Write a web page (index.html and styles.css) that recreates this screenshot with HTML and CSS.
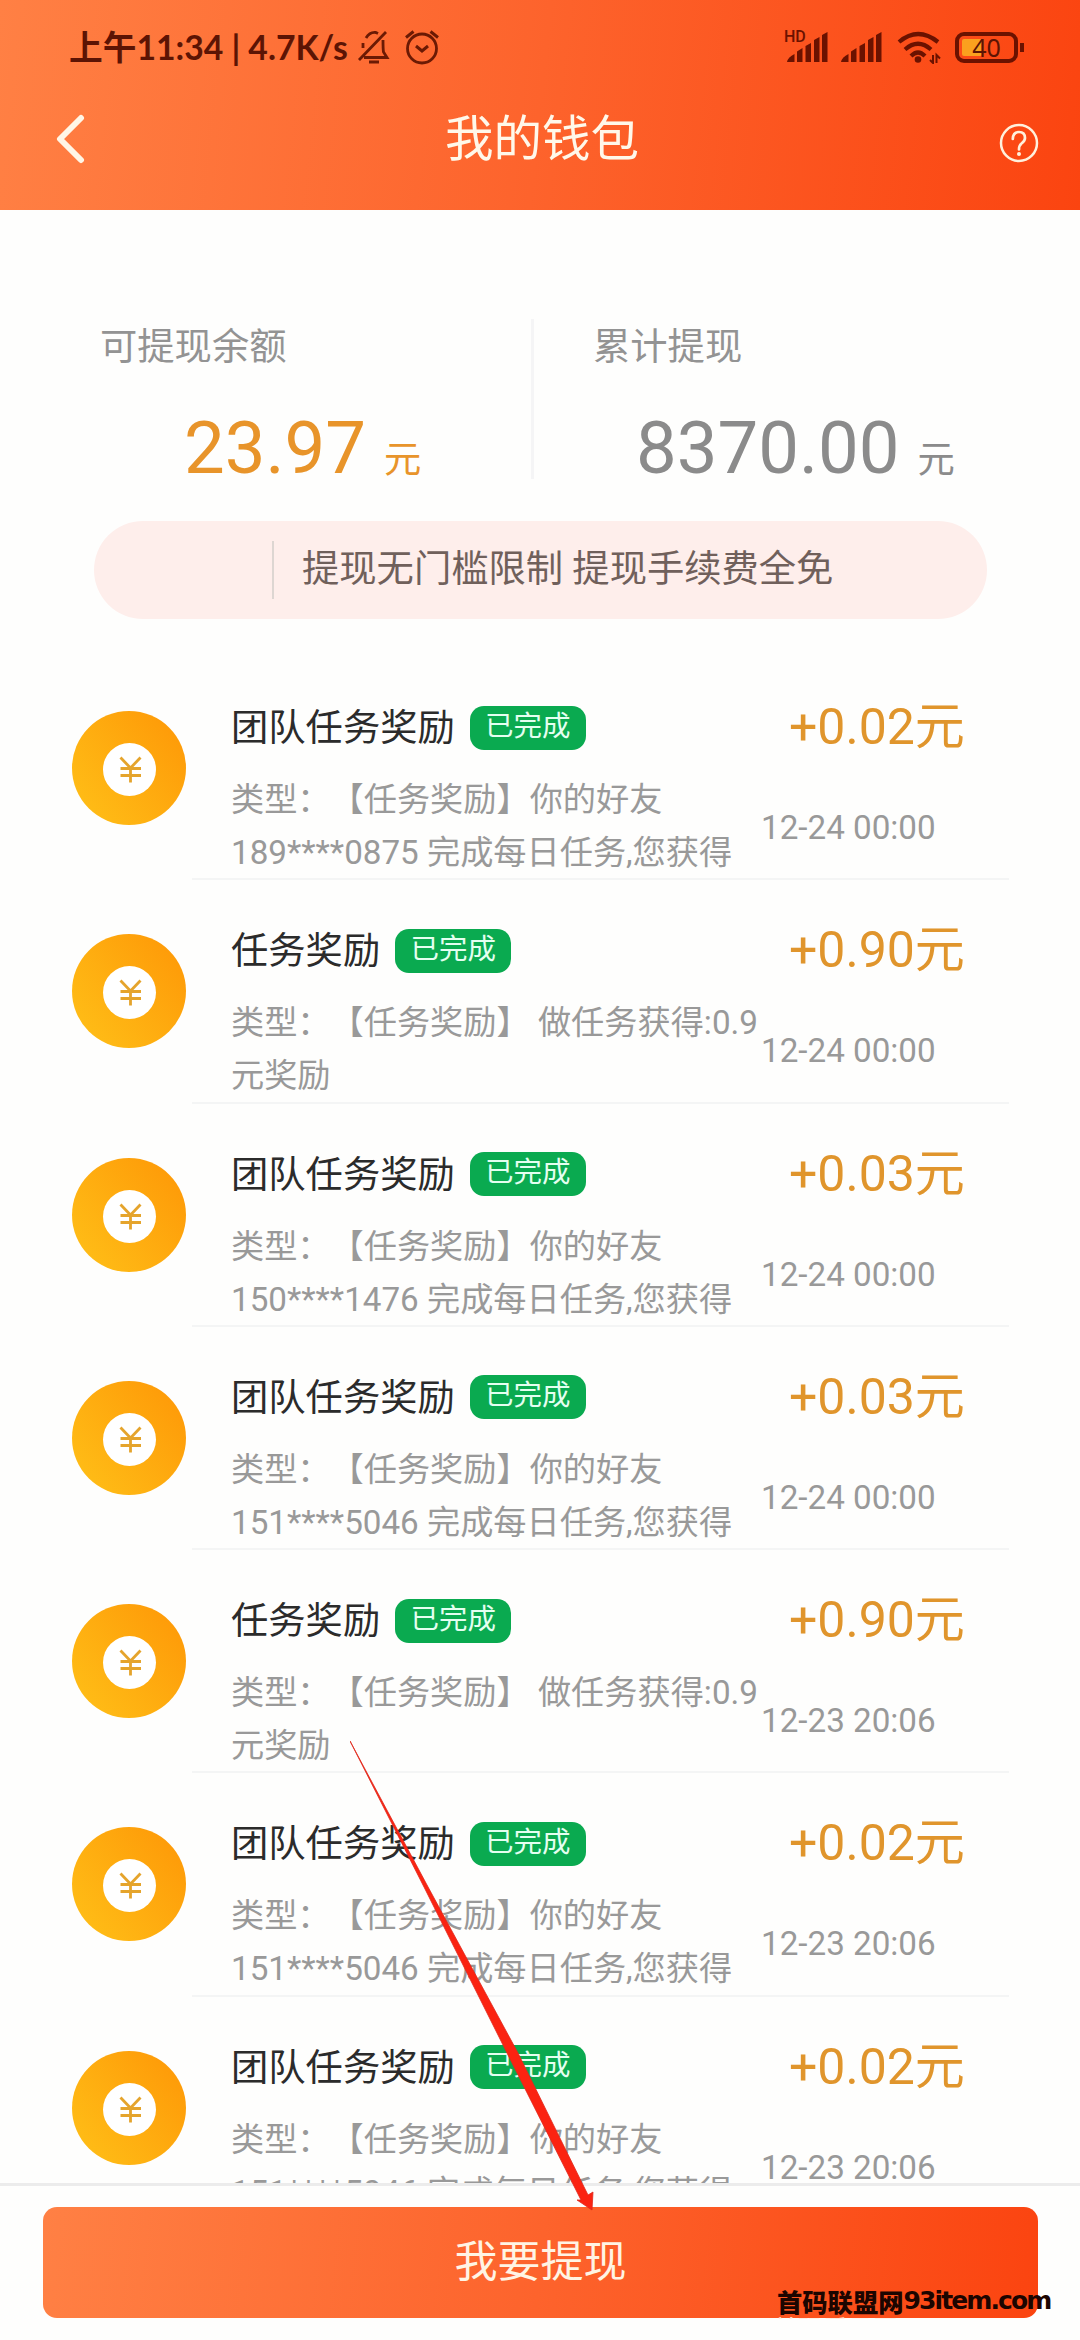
FILE: index.html
```html
<!DOCTYPE html>
<html lang="zh-CN">
<head>
<meta charset="utf-8">
<title>我的钱包</title>
<link rel="stylesheet" href="styles.css">
</head>
<body>
<svg class="defs" width="0" height="0" aria-hidden="true">
  <defs>
    <linearGradient id="gold" x1="0" y1="1" x2="1" y2="0.2">
      <stop offset="0" stop-color="#ffc118"/>
      <stop offset="1" stop-color="#fe9a08"/>
    </linearGradient>
    <symbol id="coin" viewBox="0 0 114 114">
      <circle cx="57" cy="57" r="57" fill="url(#gold)"/>
      <circle cx="57.500" cy="58.500" r="26.500" fill="#fff"/>
      <path d="M48.500 46.500L58.500 57L68.500 46.500M58.500 57V71.500M48.500 57.500H69M48.500 64.500H69" fill="none" stroke="#e5a42c" stroke-width="2.800"/>
    </symbol>
    <symbol id="bars" viewBox="0 0 42 31">
      <path d="M1 30Q2 25 8.500 22V30ZM11 19.500L16.500 16V30H11ZM19.500 14L25 11V30H19.500ZM28 8L33.500 5V30H28ZM36 3L41.500 0V30H36Z" fill="#6b1200"/>
    </symbol>
  </defs>
</svg>
<div class="screen">
  <header class="header">
    <div class="status">
      <span class="clock">上午11:34 | 4.7K/s</span>
      <svg class="bell" viewBox="0 0 34 36"><path d="M10 9Q14 2.500 20 3.500L22 4.500M27 11Q27 20 27.500 23L31 28.500H8M7 19V14M3 31L30 3M13 33H23" fill="none" stroke="#6b1a04" stroke-width="2.800"/></svg>
      <svg class="alarm" viewBox="0 0 36 36"><path d="M2 8.500L9.500 2.500M26.500 2.500L34 8.500M12 17L18 22L24 17" fill="none" stroke="#6b1a04" stroke-width="3"/><circle cx="18" cy="19.500" r="14.500" fill="none" stroke="#6b1a04" stroke-width="2.800"/></svg>
      <span class="spacer"></span>
      <span class="sim"><svg class="bars"><use href="#bars"/></svg><span class="hd">HD</span></span>
      <svg class="bars second"><use href="#bars"/></svg>
      <svg class="wifi" viewBox="0 0 44 33"><path d="M2 11Q21 -5 41 11M8 18.500Q21 7 34 18.500M14 25Q21 18 28 25" fill="none" stroke="#6b1200" stroke-width="4.200"/><circle cx="21" cy="28.500" r="3.300" fill="#6b1200"/><path d="M36 24V32L33 29M39.500 32V24L43 27.500" fill="none" stroke="#6b1200" stroke-width="2"/></svg>
      <span class="battery"><span class="level"></span><span class="pct">40</span></span><span class="nub"></span>
    </div>
    <div class="nav">
      <svg class="back" viewBox="0 0 30 50"><path d="M25 4L4 25L25 46" fill="none" stroke="#fff6e6" stroke-width="6" stroke-linecap="round" stroke-linejoin="round"/></svg>
      <h1 class="title">我的钱包</h1>
      <svg class="help" viewBox="0 0 40 40"><circle cx="20" cy="20" r="18" fill="none" stroke="#fff0dc" stroke-width="2.500"/><path d="M13.800 16Q14 9 20 9Q26 9 26 15Q26 18 22.500 20.500Q20 22.500 20 26.500" fill="none" stroke="#fff0dc" stroke-width="2.700" stroke-linecap="round"/><circle cx="20" cy="31" r="2" fill="#fff0dc"/></svg>
    </div>
  </header>
  <main class="main">
    <section class="balances">
      <div class="balance">
        <div class="label">可提现余额</div>
        <div class="value gold">23.97<span class="unit">元</span></div>
      </div>
      <div class="balance total">
        <div class="label">累计提现</div>
        <div class="value">8370.00<span class="unit">元</span></div>
      </div>
    </section>
    <div class="notice"><span class="rule"></span><span class="notice-text">提现无门槛限制 提现手续费全免</span></div>
    <ul class="list">
      <li class="item"><svg class="coin"><use href="#coin"/></svg><div class="info"><div class="name">团队任务奖励<span class="tag">已完成</span></div><div class="desc">类型：【任务奖励】你的好友<br>189****0875 完成每日任务,您获得</div></div><div class="side"><div class="amount">+0.02元</div><div class="time">12-24 00:00</div></div></li>
      <li class="item"><svg class="coin"><use href="#coin"/></svg><div class="info"><div class="name">任务奖励<span class="tag">已完成</span></div><div class="desc">类型：【任务奖励】 做任务获得:0.9<br>元奖励</div></div><div class="side"><div class="amount">+0.90元</div><div class="time">12-24 00:00</div></div></li>
      <li class="item"><svg class="coin"><use href="#coin"/></svg><div class="info"><div class="name">团队任务奖励<span class="tag">已完成</span></div><div class="desc">类型：【任务奖励】你的好友<br>150****1476 完成每日任务,您获得</div></div><div class="side"><div class="amount">+0.03元</div><div class="time">12-24 00:00</div></div></li>
      <li class="item"><svg class="coin"><use href="#coin"/></svg><div class="info"><div class="name">团队任务奖励<span class="tag">已完成</span></div><div class="desc">类型：【任务奖励】你的好友<br>151****5046 完成每日任务,您获得</div></div><div class="side"><div class="amount">+0.03元</div><div class="time">12-24 00:00</div></div></li>
      <li class="item"><svg class="coin"><use href="#coin"/></svg><div class="info"><div class="name">任务奖励<span class="tag">已完成</span></div><div class="desc">类型：【任务奖励】 做任务获得:0.9<br>元奖励</div></div><div class="side"><div class="amount">+0.90元</div><div class="time">12-23 20:06</div></div></li>
      <li class="item"><svg class="coin"><use href="#coin"/></svg><div class="info"><div class="name">团队任务奖励<span class="tag">已完成</span></div><div class="desc">类型：【任务奖励】你的好友<br>151****5046 完成每日任务,您获得</div></div><div class="side"><div class="amount">+0.02元</div><div class="time">12-23 20:06</div></div></li>
      <li class="item"><svg class="coin"><use href="#coin"/></svg><div class="info"><div class="name">团队任务奖励<span class="tag">已完成</span></div><div class="desc">类型：【任务奖励】你的好友<br>151****5046 完成每日任务,您获得</div></div><div class="side"><div class="amount">+0.02元</div><div class="time">12-23 20:06</div></div></li>
    </ul>
  </main>
  <footer class="footer"><button class="withdraw">我要提现</button></footer>
  <svg class="arrow" viewBox="0 0 246 472"><path d="M0 0L77 144L168 312L238 454L243 451L242 469L227 459L231 459L157 312L74 146Z" fill="#fb2311" stroke="#e0281c" stroke-width="0.800"/></svg>
  <div class="watermark">首码联盟网<span class="site">93item.com</span></div>
  <div class="ghost"><span>首码看日网</span><span>2019</span></div>
</div>
</body>
</html>
```
FILE: styles.css
```css
* { box-sizing: border-box; }
body {
  margin: 0;
  background: #fefefd;
  color: #2b2b2b;
  font-family: Roboto, "Noto Sans CJK SC", sans-serif;
  text-spacing-trim: space-all;
}
svg { display: block; flex: none; }
.defs { position: absolute; }
.screen {
  position: relative;
  display: flex;
  flex-direction: column;
  width: 1080px;
  height: 2340px;
  overflow: hidden;
}
.header {
  flex: none;
  height: 210px;
  background: linear-gradient(96deg, #ff8044 0%, #fd632c 50%, #fb4410 100%);
}
.status {
  display: flex;
  align-items: center;
  height: 94px;
  padding-left: 69px;
  color: #5c1404;
}
.clock {
  width: 284px;
  font: 700 33.700px/40px Lato, "Noto Sans CJK SC", sans-serif;
  white-space: nowrap;
}
.bell { width: 34px; height: 36px; margin-left: 3px; }
.alarm { width: 36px; height: 36px; margin-left: 14px; }
.spacer { flex: 1; }
.sim { position: relative; }
.bars { width: 42px; height: 31px; }
.second { margin-left: 12px; }
.hd {
  position: absolute;
  left: -2px;
  top: -3px;
  font: 500 16px/16px Roboto, sans-serif;
  color: #6b1200;
}
.wifi { width: 44px; height: 33px; margin-left: 15px; }
.battery {
  position: relative;
  width: 63px;
  height: 31px;
  margin-left: 14px;
  padding: 3px;
  border: 4px solid #6b1200;
  border-radius: 9px;
}
.level { display: block; width: 20px; height: 17px; background: #fba11e; border-radius: 2px; }
.pct {
  position: absolute;
  inset: 0;
  font: 25px/22px "Noto Sans", sans-serif;
  text-align: center;
}
.nub { width: 4px; height: 9px; margin: 0 56px 0 2px; background: #6b1200; }
.nav {
  display: flex;
  align-items: center;
  justify-content: space-between;
  height: 90px;
  padding: 0 41px 0 56px;
}
.back { width: 30px; height: 50px; }
.title {
  margin: 2px 16px 0 15px;
  padding-right: 0;
  font-size: 48.500px;
  font-weight: 400;
  line-height: 70px;
  color: #fff8ea;
}
.help { width: 40px; height: 40px; margin-top: 7px; }
.main { height: 1973px; flex: none; overflow: hidden; padding-top: 109px; }
.balances { display: flex; height: 202px; }
.balance { width: 534px; height: 160px; padding: 1px 0 0 100px; border-right: 3px solid #f5f5f6; }
.total { width: 546px; padding-left: 59px; border: 0; }
.label { font-size: 37.300px; line-height: 54px; color: #939393; }
.value {
  display: flex;
  align-items: baseline;
  margin: 32px 0 0 84px;
  font-size: 72.500px;
  line-height: 86px;
  color: #8b8b8b;
}
.total .value { margin-left: 43px; }
.value.gold { color: #e8942a; }
.unit { margin-left: 18px; font-size: 37.300px; }
.notice {
  display: flex;
  align-items: center;
  height: 98px;
  margin: 0 93px 0 94px;
  padding-left: 178px;
  border-radius: 49px;
  background: #feeeeb;
}
.rule { width: 2px; height: 58px; margin-right: 28px; background: #ddd6d2; }
.notice-text {
  margin-top: -2px;
  font-size: 37.300px;
  line-height: 58px;
  color: #70605b;
  white-space: nowrap;
}
.list { margin: 0; padding: 37px 0 0; list-style: none; }
.item { display: flex; height: 223.250px; padding: 54px 0 0 72px; }
.coin { width: 114px; height: 114px; margin-top: 1px; }
.info {
  width: 575px;
  height: 223.250px;
  margin: -53px 0 0 6px;
  padding: 41px 0 0 39px;
  border-bottom: 2px solid #f4f5f5;
}
.name {
  display: flex;
  align-items: center;
  height: 54px;
  font-size: 37.300px;
}
.tag {
  width: 116px;
  height: 44px;
  margin: 5px 0 0 15px;
  border-radius: 14px;
  background: #0aaa50;
  color: #e4fff0;
  font-size: 28.500px;
  line-height: 42px;
  text-align: center;
}
.desc { margin-top: 21px; font-size: 33.200px; line-height: 53px; color: #999; white-space: nowrap; }
.side {
  width: 242px;
  height: 223.250px;
  margin-top: -53px;
  padding-top: 41px;
  border-bottom: 2px solid #f4f5f5;
}
.amount { padding-left: 22px; font-size: 50px; line-height: 58px; color: #e0952c; white-space: nowrap; }
.time { margin: 32px 0 0 -6px; font-size: 33.200px; line-height: 80px; color: #999; white-space: nowrap; }
.footer { flex: 1; padding: 21px 42px 0 43px; border-top: 3px solid #ececec; background: #fefefd; }
.withdraw {
  display: block;
  width: 100%;
  height: 111px;
  padding: 0;
  border: 0;
  border-radius: 14px;
  background: linear-gradient(96deg, #ff8044 0%, #fd632c 50%, #fb4410 100%);
  color: #fff4e4;
  font: 43px/107px Roboto, "Noto Sans CJK SC", sans-serif;
}
.arrow { position: absolute; left: 350px; top: 1741px; width: 246px; height: 472px; }
.watermark {
  position: absolute;
  left: 777px;
  top: 2283px;
  display: flex;
  align-items: center;
  height: 36px;
  color: #1c0500;
  font: 900 25.300px/36px "Noto Sans CJK SC", sans-serif;
  white-space: nowrap;
}
.site { font: 700 25px/36px "DejaVu Sans", sans-serif; letter-spacing: -1.900px; }
.ghost {
  position: absolute;
  left: 768px;
  top: 2315px;
  display: flex;
  justify-content: space-between;
  width: 250px;
  height: 4px;
  overflow: hidden;
  color: #ffe9dc;
  font: italic 25px/25px "Noto Sans CJK SC", sans-serif;
}
```
